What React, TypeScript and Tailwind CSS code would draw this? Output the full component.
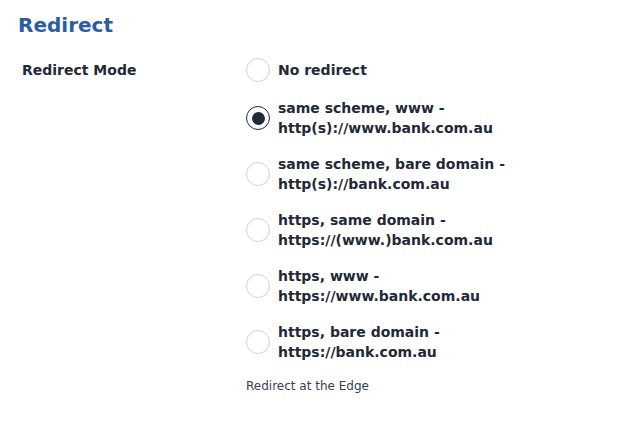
import React from "react";

const options = [
  ["No redirect"],
  ["same scheme, www -", "http(s)://www.bank.com.au"],
  ["same scheme, bare domain -", "http(s)://bank.com.au"],
  ["https, same domain -", "https://(www.)bank.com.au"],
  ["https, www -", "https://www.bank.com.au"],
  ["https, bare domain -", "https://bank.com.au"],
];

export default function App() {
  const selected = 1;
  return (
    <div
      className="w-[635px] h-[421px] bg-white px-[18px] pt-[11px]"
      style={{ fontFamily: '"DejaVu Sans", sans-serif' }}
    >
      <h1 className="text-[20px] leading-[28px] font-bold text-[#2a5ca8]">Redirect</h1>
      <div className="flex mt-[21px]">
        <div className="w-[228px] pl-[4px] text-[14px] leading-[20px] font-bold text-[#1f2937]">
          Redirect Mode
        </div>
        <div className="flex flex-col -mt-[2px]">
          <div className="flex flex-col gap-[16px]">
            {options.map((lines, i) => (
              <label key={i} className="flex items-center gap-[8px]">
                {i === selected ? (
                  <span className="w-[24px] h-[24px] rounded-full border border-[#1f2937] flex items-center justify-center shrink-0">
                    <span className="w-[13px] h-[13px] rounded-full bg-[#1f2937]" />
                  </span>
                ) : (
                  <span className="w-[24px] h-[24px] rounded-full border border-[#d4d4d8] shrink-0" />
                )}
                <span className="text-[14px] leading-[20px] font-bold text-[#1f2937]">
                  {lines.map((l, j) => (
                    <div key={j}>{l}</div>
                  ))}
                </span>
              </label>
            ))}
          </div>
          <div className="mt-[16px] text-[12px] leading-[16px] text-[#374151]">Redirect at the Edge</div>
        </div>
      </div>
    </div>
  );
}
